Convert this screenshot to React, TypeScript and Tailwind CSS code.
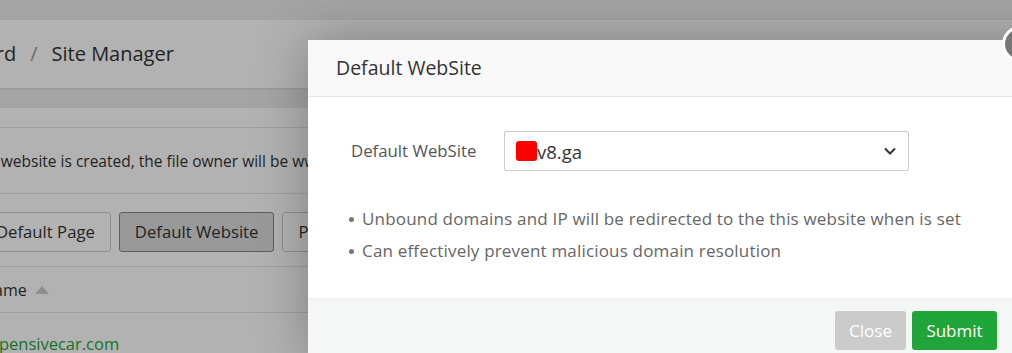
import React from "react";

const font = { fontFamily: '"Open Sans", "Noto Sans", sans-serif' };

export default function App() {
  return (
    <div className="relative w-[1012px] h-[353px] overflow-hidden bg-[#ebebeb]" style={font}>
      {/* background page */}
      <div className="pt-[20px]">
        <div className="h-[68px] bg-white flex items-center text-[20px] text-[#333] -ml-[87px] shadow-[0_1px_2px_rgba(0,0,0,0.08)] whitespace-nowrap">
          <span>Dashboard</span>
          <span className="mx-[14px] text-[#999]">/</span>
          <span>Site Manager</span>
        </div>
        <div className="mt-[20px] bg-white h-[300px]">
          <div className="h-[20px] border-b border-[#e5e5e5]" />
          <div className="h-[66px] flex items-center pt-[3px] text-[15.5px] text-[#333] -ml-[73px] whitespace-nowrap border-b border-[#e5e5e5]">
            When the website is created, the file owner will be www, please check the directory permissions
          </div>
          <div className="h-[73px] flex items-center gap-[8px] pt-[3px] -ml-[20px] border-b border-[#e5e5e5]">
            <div className="h-[40px] px-[15px] flex items-center border border-[#ccc] rounded-[3px] text-[16.7px] text-[#333] whitespace-nowrap">Default Page</div>
            <div className="h-[40px] px-[15px] flex items-center border border-[#888] bg-[#dcdcdc] rounded-[3px] text-[16.7px] text-[#333] whitespace-nowrap">Default Website</div>
            <div className="h-[40px] px-[15px] flex items-center border border-[#ccc] rounded-[3px] text-[16.7px] text-[#333] whitespace-nowrap">PHP Command Line</div>
          </div>
          <div className="h-[46px] flex items-center text-[16px] text-[#333] -ml-[18px] border-b border-[#e5e5e5]">
            Name
            <svg width="14" height="8" viewBox="0 0 14 8" className="ml-[8px]"><path d="M0 8 L7 0 L14 8 Z" fill="#ccc" /></svg>
          </div>
          <div className="h-[62px] flex items-center text-[16.5px] text-[#20a53a] -ml-[19px] whitespace-nowrap">expensivecar.com</div>
        </div>
      </div>

      {/* overlay */}
      <div className="absolute inset-0 bg-black/30" />

      {/* modal */}
      <div className="absolute left-[308px] top-[40px] w-[760px] bg-white shadow-[1px_1px_50px_rgba(0,0,0,0.3)]">
        <div className="h-[57px] bg-[#f8f8f8] border-b border-[#e5e5e5] flex items-center pl-[28px] text-[19.5px] text-[#333]">
          Default WebSite
        </div>
        <div className="h-[201px] pt-[34px]">
          <div className="flex items-center">
            <div className="w-[196px] pl-[43px] text-[16.8px] text-[#555] whitespace-nowrap">Default WebSite</div>
            <div className="w-[405px] h-[40px] border border-[#ccc] rounded-[2px] flex items-center pl-[11px] pr-[12px]">
              <span className="w-[21px] h-[20px] bg-[#ff0000] rounded-[3px]" />
              <span className="text-[18.5px] text-[#333] leading-none pt-[3px]">v8.ga</span>
              <svg className="ml-auto" width="12" height="8" viewBox="0 0 12 8"><path d="M1 1.5 L6 6.5 L11 1.5" fill="none" stroke="#333" strokeWidth="2" /></svg>
            </div>
          </div>
          <ul className="mt-[32px] pl-[41px] text-[17px] text-[#666] tracking-[0.18px] whitespace-nowrap">
            <li className="flex items-center h-[32px]"><span className="w-[5px] h-[5px] rounded-full bg-[#777] mr-[8px]" />Unbound domains and IP will be redirected to the this website when is set</li>
            <li className="flex items-center h-[32px]"><span className="w-[5px] h-[5px] rounded-full bg-[#777] mr-[8px]" />Can effectively prevent malicious domain resolution</li>
          </ul>
        </div>
        <div className="h-[60px] bg-[#f5f6f6] border-t border-[#eee] flex items-start pt-[12px] pl-[527px] gap-[6px]">
          <button className="h-[39px] w-[71px] rounded-[3px] bg-[#cbcbcb] text-white text-[17px]">Close</button>
          <button className="h-[39px] w-[85px] rounded-[3px] bg-[#20a53a] text-white text-[17px]">Submit</button>
        </div>
      </div>

      {/* close circle */}
      <div className="absolute left-[1002px] top-[26px] w-[36px] h-[36px] rounded-full bg-[#777] border-[3px] border-white" />
    </div>
  );
}
